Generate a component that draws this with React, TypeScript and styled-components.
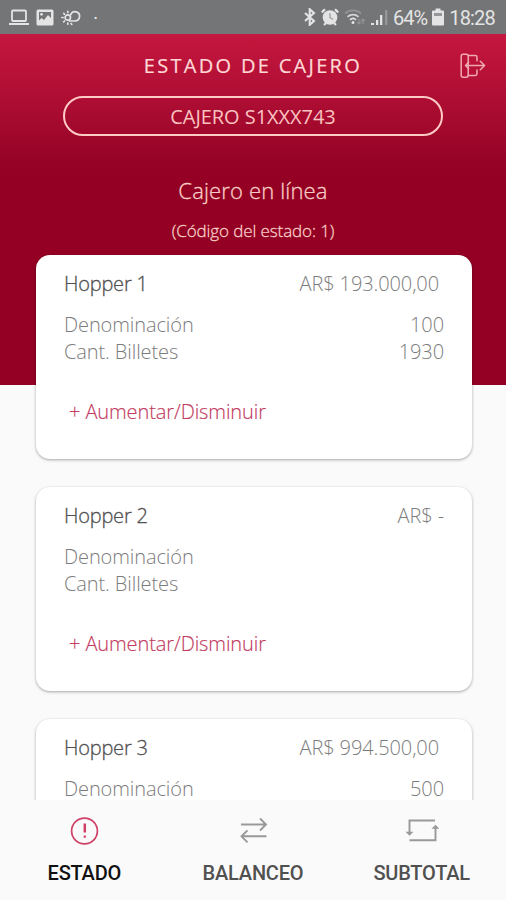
import React from "react";
import styled, { createGlobalStyle } from "styled-components";

const GlobalStyle = createGlobalStyle`
  * { box-sizing: border-box; }
  body { margin: 0; background: #fafafa; }
`;

const Screen = styled.div`
  width: 506px;
  height: 900px;
  display: flex;
  flex-direction: column;
  overflow: hidden;
  background: #fafafa;
  font-family: "Open Sans", sans-serif;
  font-weight: 300;
`;

const StatusBar = styled.header`
  flex: none;
  height: 34px;
  display: flex;
  align-items: center;
  justify-content: space-between;
  padding: 0 11px 0 9px;
  background: #737577;
  color: #e4e4e4;
  font: 400 20px/32px Roboto, sans-serif;
`;

const StatusGroup = styled.div<{ $gap: number }>`
  display: flex;
  align-items: center;
  gap: ${(p) => p.$gap}px;
  svg { display: block; flex: none; }
`;

const StatusText = styled.span<{ $spacing: number }>`
  letter-spacing: ${(p) => p.$spacing}px;
  padding-top: 2px;
`;

const Content = styled.main`
  flex: 1;
  min-height: 0;
  overflow: hidden;
  display: flex;
  flex-direction: column;
  background:
    linear-gradient(#c5173f 0, #ad0d33 68px, #960326 125px, #930023 150px, #930023 351px) 0 0 / 100% 351px no-repeat,
    #fafafa;
`;

const TitleRow = styled.div`
  height: 62px;
  padding-top: 2px;
  flex: none;
  display: grid;
  grid-template-columns: 64px 1fr 64px;
  align-items: center;
  justify-items: center;
`;

const Title = styled.h1`
  margin: 0;
  color: #ffd9d6;
  font-size: 20px;
  line-height: 28px;
  font-weight: 400;
  letter-spacing: 2.3px;
  white-space: nowrap;
  -webkit-text-stroke: 0.2px #ffd9d6;
`;

const ExitButton = styled.button`
  border: 0;
  padding: 0;
  margin-right: 2px;
  background: none;
  svg { display: block; }
`;

const CashierPill = styled.div`
  flex: none;
  align-self: center;
  width: 380px;
  height: 40px;
  border: 2px solid #ffc9c5;
  border-radius: 20px;
  display: flex;
  align-items: center;
  justify-content: center;
  color: #fac3c0;
  font-size: 20px;
  font-weight: 400;
  letter-spacing: -0.05px;
`;

const Online = styled.p`
  flex: none;
  margin: 40px 0 0;
  text-align: center;
  color: #f8cfc7;
  font-size: 22px;
  line-height: 28px;
  letter-spacing: 0.15px;
  -webkit-text-stroke: 0.3px #f8cfc7;
`;

const StateCode = styled.p`
  flex: none;
  margin: 16px 0 0;
  text-align: center;
  color: #f8cfc7;
  font-size: 17px;
  line-height: 22px;
  letter-spacing: -0.1px;
  -webkit-text-stroke: 0.3px #f8cfc7;
`;

const CardList = styled.div`
  flex: none;
  margin-top: 13px;
  padding: 0 34px 0 36px;
  display: flex;
  flex-direction: column;
  gap: 28px;
`;

const Card = styled.section`
  height: 204px;
  border-radius: 14px;
  padding: 15px 28px 0;
  background: #fff;
  box-shadow: 0 1px 3px rgba(0, 0, 0, 0.34);
  color: #7c7c7c;
  font-size: 20px;
  line-height: 27px;
  letter-spacing: -0.1px;
`;

const CardRow = styled.div`
  display: flex;
  justify-content: space-between;
`;

const CardHead = styled(CardRow)`
  margin-bottom: 14px;
`;

const HopperName = styled.h2`
  margin: 0;
  color: #505050;
  font-size: 20px;
  font-weight: 300;
  letter-spacing: -0.2px;
  -webkit-text-stroke: 0.3px #505050;
`;

const Amount = styled.span<{ $inset: boolean }>`
  margin-right: ${(p) => (p.$inset ? 5 : 0)}px;
`;

const AdjustButton = styled.button`
  display: block;
  margin: 33px 0 0 5px;
  padding: 0;
  border: 0;
  background: none;
  color: #c23a60;
  font: 300 20px/27px "Open Sans", sans-serif;
  letter-spacing: -0.1px;
  -webkit-text-stroke: 0.15px #c23a60;
`;

const TabBar = styled.nav`
  flex: 0 0 100px;
  display: grid;
  grid-template-columns: repeat(3, 1fr);
  background: #fafafa;
`;

const Tab = styled.button<{ $active?: boolean }>`
  display: flex;
  flex-direction: column;
  align-items: center;
  padding: 16px 0 0;
  border: 0;
  background: none;
  color: ${(p) => (p.$active ? "#111" : "#505050")};
  font: 500 20px/24px Roboto, sans-serif;
  letter-spacing: -0.2px;
  svg { display: block; margin-bottom: 15px; }
`;

const LaptopIcon = () => (
  <svg width="20" height="17" viewBox="0 0 20 17" fill="none" stroke="#e4e4e4">
    <rect x="3" y="1.5" width="14" height="10.5" rx="1" strokeWidth="1.8" />
    <path d="M0 15h20" strokeWidth="2" />
  </svg>
);

const PictureIcon = () => (
  <svg width="18" height="17" viewBox="0 0 18 17">
    <rect x="0.5" y="0.5" width="17" height="16" rx="1.5" fill="#e4e4e4" />
    <path d="M3 3h12v6l-3-3-4 5-2.5-2L3 11.5z" fill="#737577" />
    <circle cx="5.5" cy="5.3" r="1.4" fill="#e4e4e4" />
  </svg>
);

const WeatherIcon = () => (
  <svg width="20" height="17" viewBox="0 0 20 17" fill="none" stroke="#e4e4e4" strokeWidth="1.7" strokeLinecap="round">
    <path d="M8.5 12h5.500a4.600 4.600 0 1 0-4.300-6.300" />
    <circle cx="6.800" cy="8.500" r="2.700" />
    <path d="M6.800 2.400v1M2.700 4.300l.8.800M.9 8.500h1.200M2.700 12.800l.8-.8M6.800 14v1.200M10 14.500l.8.800" />
  </svg>
);

const BluetoothIcon = () => (
  <svg width="12" height="18" viewBox="0 0 12 18" fill="none" stroke="#e4e4e4" strokeWidth="2.1">
    <path d="M1 5l9 8-4.3 3.8V1.2L10 5l-9 8" />
  </svg>
);

const AlarmIcon = () => (
  <svg width="18" height="18" viewBox="0 0 18 18">
    <circle cx="9" cy="9.5" r="7.3" fill="#e4e4e4" />
    <path d="M.8 4.400L4 1.200M17.200 4.400L14 1.200M3 17l2-2M15 17l-2-2" stroke="#e4e4e4" strokeWidth="2.2" />
    <path d="M9 5.200v4.500l3.200 1.800" fill="none" stroke="#a0a2a3" strokeWidth="1.4" />
  </svg>
);

const WifiIcon = () => (
  <svg width="22" height="18" viewBox="0 0 22 18" fill="none" strokeWidth="1.7">
    <path d="M1 5.500a12 12 0 0 1 16 0" stroke="#929495" />
    <path d="M3.500 8.800a8 8 0 0 1 11 0" stroke="#d4d4d4" />
    <path d="M6 11.800a4.500 4.500 0 0 1 6 0" stroke="#e4e4e4" />
    <circle cx="9" cy="14.5" r="1.5" fill="#e4e4e4" />
    <path d="M15 11v5m-2-2l2 2 2-2M19 16v-5m-2 2l2-2 2 2" stroke="#929495" strokeWidth="1.1" />
  </svg>
);

const SignalIcon = () => (
  <svg width="17" height="17" viewBox="0 0 17 17">
    <path d="M0 14h3v2H0zM5 11h2.300v5H5zM9 6h2.300v10H9z" fill="#e4e4e4" />
    <path d="M14 1h2.400v15H14z" fill="#949697" />
  </svg>
);

const BatteryIcon = () => (
  <svg width="12" height="18" viewBox="0 0 12 18">
    <path d="M3.500 0.500h5v2H11a1 1 0 0 1 1 1v13a1 1 0 0 1-1 1H1a1 1 0 0 1-1-1v-13a1 1 0 0 1 1-1h2.500z" fill="#e4e4e4" />
    <path d="M2 5h8v3H2z" fill="#96989a" />
  </svg>
);

const ExitIcon = () => (
  <svg width="26" height="26" viewBox="0 0 26 26" fill="none" stroke="#f0a9b2" strokeWidth="1.5" strokeLinecap="round" strokeLinejoin="round">
    <rect x="1.200" y="1.200" width="7" height="23" rx="2" />
    <path d="M8.200 2.500h7.100q1.700 0 1.700 1.700v3.600M17 17v3.800q0 1.700-1.700 1.700H8.200" />
    <path d="M6 12.500h18M20.300 8.200l4.300 4.300-4.300 4.300M8.700 9.300L5.500 12.500l3.200 3.200" />
  </svg>
);

const AlertIcon = () => (
  <svg width="30" height="30" viewBox="0 0 30 30" fill="none" stroke="#cf4267">
    <circle cx="15.5" cy="15" r="12.9" strokeWidth="1.7" />
    <path d="M15.800 7.500v9" strokeWidth="2.5" />
    <path d="M15.800 19.500v2.200" strokeWidth="2.2" />
  </svg>
);

const TransferIcon = () => (
  <svg width="30" height="30" viewBox="0 0 30 30" fill="none" stroke="#999" strokeWidth="1.9">
    <path d="M3 8.500h25M22 2.500l6 6-6 6M28.500 20.300H3.500M9.500 14.300l-6 6 6 6" />
  </svg>
);

const CycleIcon = () => (
  <svg width="34" height="30" viewBox="0 0 34 30" fill="none" stroke="#999" strokeWidth="1.9">
    <path d="M30 4.500H4.500v13M4.500 24.200h26V12" />
    <path d="M.5 15.800h8l-4 4zM26.500 12.800h8l-4-4z" fill="#999" stroke="none" />
  </svg>
);

interface Detail {
  label: string;
  value: string;
}

interface Hopper {
  name: string;
  amount: string;
  details: Detail[];
  adjustable: boolean;
}

const hoppers: Hopper[] = [
  {
    name: "Hopper 1",
    amount: "AR$ 193.000,00",
    details: [
      { label: "Denominación", value: "100" },
      { label: "Cant. Billetes", value: "1930" },
    ],
    adjustable: true,
  },
  {
    name: "Hopper 2",
    amount: "AR$ -",
    details: [
      { label: "Denominación", value: "" },
      { label: "Cant. Billetes", value: "" },
    ],
    adjustable: true,
  },
  {
    name: "Hopper 3",
    amount: "AR$ 994.500,00",
    details: [{ label: "Denominación", value: "500" }],
    adjustable: false,
  },
];

const HopperCard = ({ hopper }: { hopper: Hopper }) => (
  <Card>
    <CardHead>
      <HopperName>{hopper.name}</HopperName>
      <Amount $inset={!hopper.amount.endsWith("-")}>{hopper.amount}</Amount>
    </CardHead>
    {hopper.details.map((detail) => (
      <CardRow key={detail.label}>
        <span>{detail.label}</span>
        <span>{detail.value}</span>
      </CardRow>
    ))}
    {hopper.adjustable && <AdjustButton>+ Aumentar/Disminuir</AdjustButton>}
  </Card>
);

export default function App() {
  return (
    <>
      <GlobalStyle />
      <Screen>
        <StatusBar>
          <StatusGroup $gap={7}>
            <LaptopIcon />
            <PictureIcon />
            <WeatherIcon />
            <StatusText $spacing={0}>&nbsp;·</StatusText>
          </StatusGroup>
          <StatusGroup $gap={5}>
            <BluetoothIcon />
            <AlarmIcon />
            <WifiIcon />
            <SignalIcon />
            <StatusText $spacing={-1}>64%</StatusText>
            <BatteryIcon />
            <StatusText $spacing={-0.8}>18:28</StatusText>
          </StatusGroup>
        </StatusBar>
        <Content>
          <TitleRow>
            <span />
            <Title>ESTADO DE CAJERO</Title>
            <ExitButton aria-label="Salir">
              <ExitIcon />
            </ExitButton>
          </TitleRow>
          <CashierPill>CAJERO S1XXX743</CashierPill>
          <Online>Cajero en línea</Online>
          <StateCode>(Código del estado: 1)</StateCode>
          <CardList>
            {hoppers.map((hopper) => (
              <HopperCard key={hopper.name} hopper={hopper} />
            ))}
          </CardList>
        </Content>
        <TabBar>
          <Tab $active>
            <AlertIcon />
            ESTADO
          </Tab>
          <Tab>
            <TransferIcon />
            BALANCEO
          </Tab>
          <Tab>
            <CycleIcon />
            SUBTOTAL
          </Tab>
        </TabBar>
      </Screen>
    </>
  );
}
